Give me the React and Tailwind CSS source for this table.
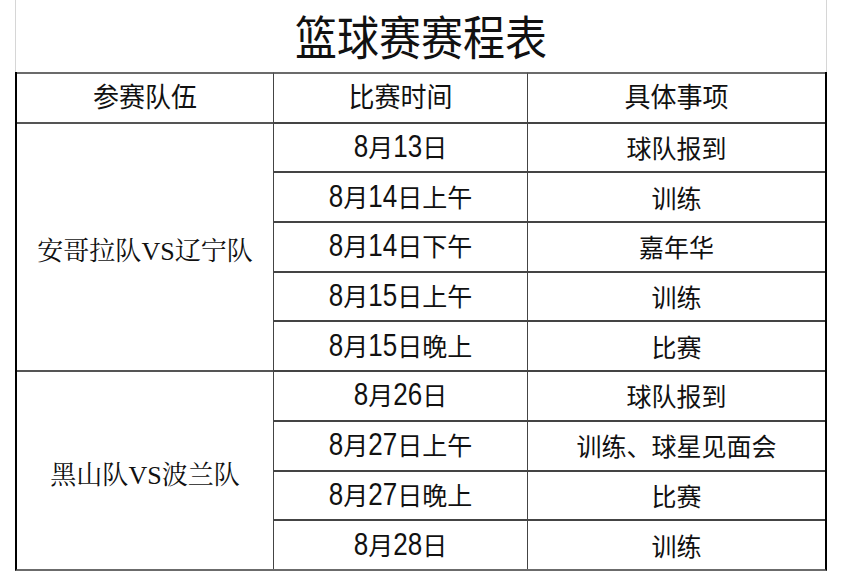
import React from 'react';

const sans = "font-['Liberation_Sans','Noto_Sans_CJK_SC',sans-serif]";

// digits in the reference are a narrow face, taller than the CJK glyphs
function DateText({ parts }) {
  return (
    <span className="inline-flex items-baseline">
      {parts.map((p, i) =>
        /\d/.test(p) ? (
          <span key={i} className="inline-block font-['Liberation_Sans',sans-serif] text-[26px] scale-y-[1.24] origin-[50%_80%]">
            {p}
          </span>
        ) : (
          <span key={i} className="font-['Noto_Sans_CJK_SC',sans-serif] text-[25px]">
            {p}
          </span>
        )
      )}
    </span>
  );
}

const groups = [
  {
    team: ['安哥拉队', 'VS', '辽宁队'],
    rows: [
      [['8', '月', '13', '日'], '球队报到'],
      [['8', '月', '14', '日上午'], '训练'],
      [['8', '月', '14', '日下午'], '嘉年华'],
      [['8', '月', '15', '日上午'], '训练'],
      [['8', '月', '15', '日晚上'], '比赛'],
    ],
  },
  {
    team: ['黑山队', 'VS', '波兰队'],
    rows: [
      [['8', '月', '26', '日'], '球队报到'],
      [['8', '月', '27', '日上午'], '训练、球星见面会'],
      [['8', '月', '27', '日晚上'], '比赛'],
      [['8', '月', '28', '日'], '训练'],
    ],
  },
];

export default function App() {
  return (
    <div className="w-[841px] h-[582px] bg-white overflow-hidden text-[#111]">
      <div className="ml-[15px] w-[812px]">
        {/* Title */}
        <div className="h-[72px] flex items-center justify-center border-x border-[#d6d6d6]">
          <h1 className="font-['Noto_Sans_CJK_SC',sans-serif] text-[42px] leading-none font-normal inline-block scale-y-[1.1] -translate-y-[1px]">
            篮球赛赛程表
          </h1>
        </div>

        {/* Table */}
        <div className="grid grid-cols-[256px_254px_1fr] grid-rows-[repeat(10,49.7px)] border-l-2 border-r-2 border-l-black border-r-black border-b-2 border-b-[#6b6b6b]">
          {['参赛队伍', '比赛时间', '具体事项'].map((h, i) => (
            <div
              key={h}
              className={`flex items-center justify-center border-t-2 border-t-[#6b6b6b] ${sans} text-[26px] leading-none ${
                i > 0 ? 'border-l-[1.5px] border-l-[#444]' : ''
              }`}
            >
              <span className="inline-block scale-y-[1.05]">{h}</span>
            </div>
          ))}

          {groups.map((g, gi) => (
            <React.Fragment key={gi}>
              <div
                className={`col-start-1 flex items-center justify-center pt-[8px] border-t-2 border-t-[#555] ${
                  gi === 0 ? 'row-start-2 row-span-5' : 'row-start-7 row-span-4'
                }`}
              >
                <span className="font-['Noto_Serif_CJK_SC','Noto_Sans_CJK_SC',serif] text-[26px] leading-none">
                  {g.team[0]}
                  <span className="font-['Liberation_Serif',serif]">{g.team[1]}</span>
                  {g.team[2]}
                </span>
              </div>
              {g.rows.map(([date, item], ri) => (
                <React.Fragment key={ri}>
                  <div className="col-start-2 flex items-center justify-center border-t-2 border-t-[#444] border-l-[1.5px] border-l-[#444] leading-none">
                    <DateText parts={date} />
                  </div>
                  <div className="col-start-3 flex items-center justify-center border-t-2 border-t-[#444] border-l-[1.5px] border-l-[#444] font-['Noto_Sans_CJK_SC',sans-serif] text-[25px] leading-none">
                    {item}
                  </div>
                </React.Fragment>
              ))}
            </React.Fragment>
          ))}
        </div>
      </div>
    </div>
  );
}
